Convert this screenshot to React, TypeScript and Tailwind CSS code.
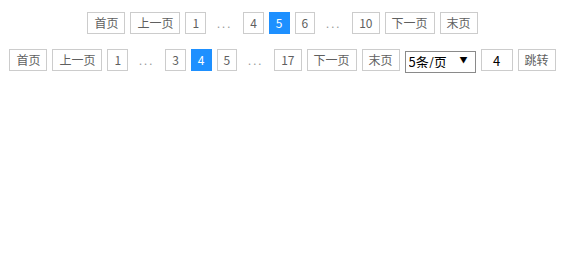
import { useState } from "react";

type Item = number | "prev" | "next" | "first" | "last" | "dots";

function PageBtn({ label, active }: { label: string; active?: boolean }) {
  return (
    <span
      className={
        "inline-flex h-[22px] min-w-[20px] items-center justify-center border px-[6px] text-[12px] leading-none cursor-pointer " +
        (active ? "border-[#1e90ff] bg-[#1e90ff] text-white" : "border-[#cccccc] bg-white text-[#5f5f5f]")
      }
    >
      {label}
    </span>
  );
}

function Dots() {
  return <span className="inline-flex w-[27px] justify-center text-[11px] tracking-[2px] text-[#999999]">...</span>;
}

function Pager({ items, current }: { items: Item[]; current: number }) {
  return (
    <div className="flex items-center justify-center gap-[5px]">
      {items.map((it, i) => {
        if (it === "first") return <PageBtn key={i} label="首页" />;
        if (it === "prev") return <PageBtn key={i} label="上一页" />;
        if (it === "next") return <PageBtn key={i} label="下一页" />;
        if (it === "last") return <PageBtn key={i} label="末页" />;
        if (it === "dots") return <Dots key={i} />;
        return <PageBtn key={i} label={String(it)} active={it === current} />;
      })}
    </div>
  );
}

export default function App() {
  const [size, setSize] = useState("5");
  const [jump, setJump] = useState("4");

  return (
    <div
      className="flex min-h-[260px] flex-col gap-[14px] bg-white pt-[12px]"
      style={{ fontFamily: '"Noto Sans CJK SC", "Liberation Sans", sans-serif' }}
    >
      <Pager items={["first", "prev", 1, "dots", 4, 5, 6, "dots", 10, "next", "last"]} current={5} />
      <div className="flex items-center justify-center gap-[5px]">
        <Pager items={["first", "prev", 1, "dots", 3, 4, 5, "dots", 17, "next", "last"]} current={4} />
        <div className="relative">
          <select
            value={size}
            onChange={(e) => setSize(e.target.value)}
            className="h-[22px] w-[71px] appearance-none border border-[#8a8a8a] bg-white pl-[3px] text-[13px] leading-none text-black outline-none"
          >
            <option value="5">5条/页</option>
            <option value="10">10条/页</option>
            <option value="20">20条/页</option>
          </select>
          <span className="pointer-events-none absolute right-[8px] top-[8px] text-[8px] leading-none text-black">▼</span>
        </div>
        <input
          value={jump}
          onChange={(e) => setJump(e.target.value)}
          className="h-[22px] w-[32px] border border-[#cccccc] text-center text-[13px] text-black outline-none"
        />
        <PageBtn label="跳转" />
      </div>
    </div>
  );
}
